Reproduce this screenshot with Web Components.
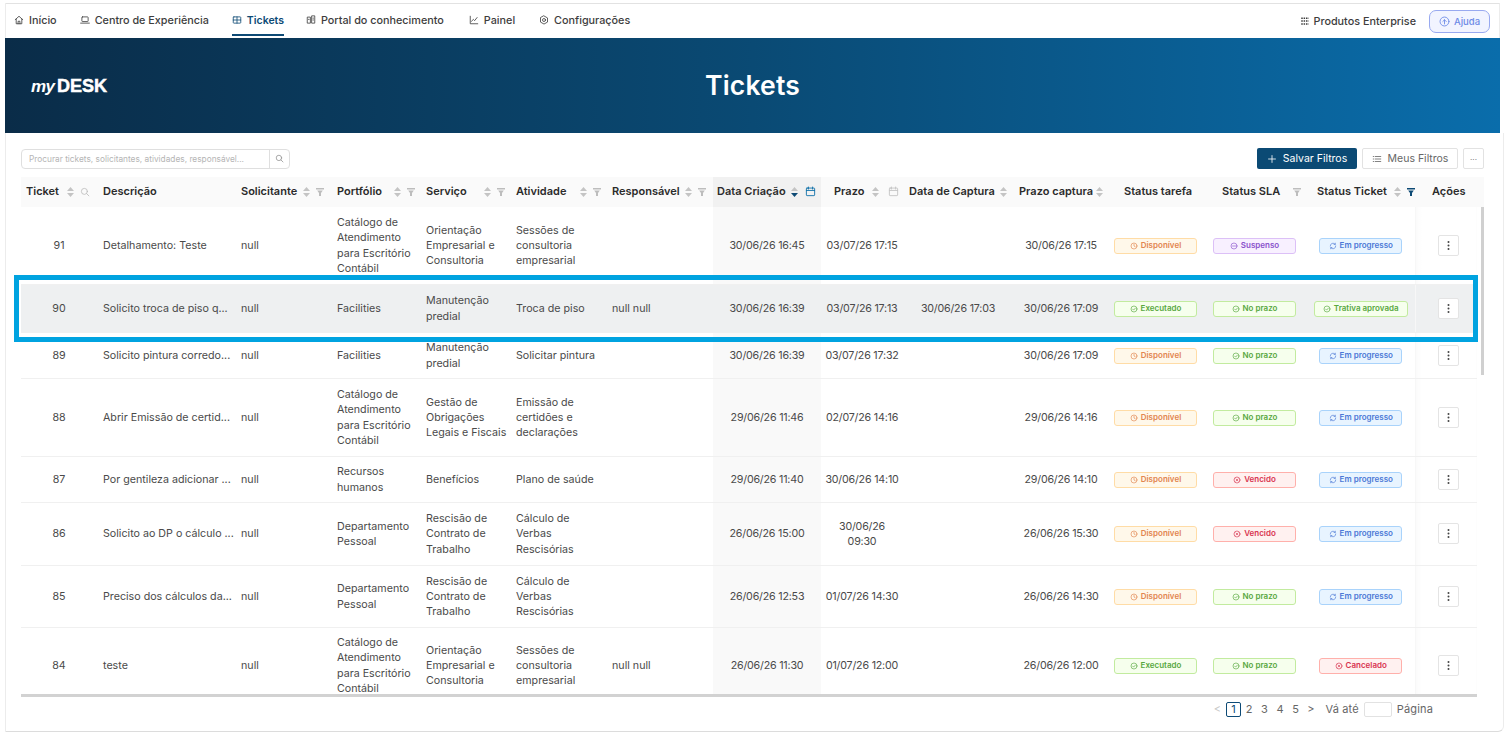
<!DOCTYPE html>
<html lang="pt-BR">
<head>
<meta charset="utf-8">
<title>Tickets</title>
<style>
    html, body { margin: 0; padding: 0; height: 733px; overflow: hidden; background: #fff; }
    body { font-family: Inter, "Open Sans", sans-serif; color: #444; }
</style>
</head>
<body>
<desk-app>
    <top-nav></top-nav>
    <hero-banner title="Tickets"></hero-banner>
    <ticket-panel></ticket-panel>
    <row-highlight></row-highlight>
</desk-app>

<script>
const svg = (body, size = 10, extra = '') =>
    `<svg width="${size}" height="${size}" viewBox="0 0 16 16" fill="none" stroke="currentColor" stroke-width="1.3" stroke-linecap="round" stroke-linejoin="round" ${extra}>${body}</svg>`;

const ICONS = {
    home: '<path d="M2 7.500 8 2l6 5.500"/><path d="M3.500 6.500V14h9V6.500"/><path d="M6.500 14v-4h3v4"/>',
    laptop: '<rect x="3" y="3" width="10" height="7.500" rx="1"/><path d="M1 13h14"/>',
    tickets: '<rect x="2" y="3" width="12" height="10" rx="1"/><path d="M8 3v10M2 8h12"/>',
    book: '<path d="M2 4v9h5V4zM9 2v11h5V2z"/><path d="M4 7h1M11 5h1M11 8h1"/>',
    chart: '<path d="M2 2v12h12"/><path d="m4 10 3-3 2 2 4-5"/>',
    gear: '<path d="M8 1.500 13.600 4.700v6.600L8 14.500l-5.600-3.200V4.700z"/><circle cx="8" cy="8" r="2.400"/>',
    grid: '<path stroke-width="2.400" stroke-linecap="butt" stroke-dasharray="2.400 1.400" d="M2 3.400h12M2 8h12M2 12.600h12"/>',
    help: '<circle cx="8" cy="8" r="6.500"/><path d="M8 11.500V5.500M5.500 8 8 5.500 10.500 8"/>',
    search: '<circle cx="7" cy="7" r="4.800"/><path d="m10.600 10.600 3.600 3.600"/>',
    plus: '<path d="M8 2.500v11M2.500 8h11"/>',
    list: '<path d="M5 4h9M5 8h9M5 12h9M2 4h.6M2 8h.6M2 12h.6"/>',
    calendar: '<rect x="2" y="3" width="12" height="11" rx="1"/><path d="M2 6.500h12M5 1.500v3M11 1.500v3"/>',
    clock: '<circle cx="8" cy="8" r="6"/><path d="M8 4.500V8l2.500 1.500"/>',
    check: '<circle cx="8" cy="8" r="6"/><path d="m5.200 8.200 2 2 3.600-4"/>',
    pause: '<circle cx="8" cy="8" r="6"/><path d="M5 8h6"/>',
    sync: '<path d="M13.500 8A5.500 5.500 0 0 1 3.600 11.300M2.500 8a5.500 5.500 0 0 1 9.900-3.300"/><path d="M12.600 2.400v2.500h-2.500M3.400 13.600v-2.500h2.500"/>',
    cross: '<circle cx="8" cy="8" r="6"/><path d="m5.800 5.800 4.400 4.400M10.200 5.800l-4.400 4.400"/>'
};

class DeskApp extends HTMLElement {
    constructor() {
        super();
        this.attachShadow({ mode: 'open' });
    }

    connectedCallback() {
        this.shadowRoot.innerHTML = `
            <style>
                :host { display: block; position: relative; height: 733px; box-sizing: border-box; padding-top: 3px; }
                .frame {
                    display: flex; flex-direction: column; height: 729px; margin-left: 5px;
                    border-left: 1px solid #ececec; box-sizing: border-box;
                }
            </style>
            <div class="frame"><slot></slot></div>
        `;
    }
}

class TopNav extends HTMLElement {
    constructor() {
        super();
        this.attachShadow({ mode: 'open' });
    }

    connectedCallback() {
        const items = [
            ['home', 'Início', 8],
            ['laptop', 'Centro de Experiência', 23],
            ['tickets', 'Tickets', 23],
            ['book', 'Portal do conhecimento', 22],
            ['chart', 'Painel', 25],
            ['gear', 'Configurações', 24]
        ];
        this.shadowRoot.innerHTML = `
            <style>
                :host {
                    display: flex; align-items: center; justify-content: space-between; height: 35px; flex: none; box-sizing: border-box;
                    margin-right: 4px; border-top: 1px solid #e2e2e2; border-right: 1px solid #ececec;
                    font-size: 10.8px; font-weight: 500; color: #3d3d3d;
                }
                nav { display: flex; height: 100%; }
                a { display: flex; align-items: center; gap: 5px; height: 32px; margin-bottom: 2px; color: inherit; text-decoration: none; box-sizing: border-box; padding-top: 2px; border-bottom: 2px solid transparent; }
                a.on { color: #0d4a75; font-size: 10.5px; font-weight: 600; border-bottom-color: #0d4a75; }
                .right { display: flex; align-items: center; }
                .products { display: flex; align-items: center; gap: 4px; margin-right: 13px; }
                button {
                    display: flex; align-items: center; justify-content: center; gap: 4px; width: 61px; height: 23px; margin-right: 9px;
                    font: inherit; font-size: 9.5px; color: #6d8ae6; background: #f2f4ff;
                    border: 1.5px solid #98a9f0; border-radius: 7px; padding: 0;
                }
            </style>
            <nav>
                ${items.map(([icon, label, ml]) => `
                    <a href="#" class="${label === 'Tickets' ? 'on' : ''}" style="margin-left:${ml}px">${svg(ICONS[icon])}<span>${label}</span></a>
                `).join('')}
            </nav>
            <div class="right">
                <span class="products">${svg(ICONS.grid)}Produtos Enterprise</span>
                <button>${svg(ICONS.help, 11)}Ajuda</button>
            </div>
        `;
    }
}

class HeroBanner extends HTMLElement {
    constructor() {
        super();
        this.attachShadow({ mode: 'open' });
    }

    connectedCallback() {
        this.shadowRoot.innerHTML = `
            <style>
                :host {
                    display: grid; grid-template-columns: 1fr auto 1fr; align-items: center; flex: none;
                    height: 95px; margin-left: -1px; margin-right: 4px; color: #fff;
                    background: linear-gradient(90deg, #0a2c48 0%, #0a4a74 50%, #0a6dab 100%);
                }
                .logo { display: flex; align-items: baseline; padding-left: 26px; }
                .my { font: italic 700 17px "Liberation Sans", sans-serif; margin-right: 2px; letter-spacing: -.5px; }
                .desk { font: 700 19px "Liberation Sans", sans-serif; -webkit-text-stroke: .5px #fff; transform: scaleX(.95); transform-origin: left; }
                h1 { margin: 0 0 2px; font-size: 26.5px; font-weight: 600; letter-spacing: .2px; }
            </style>
            <div class="logo"><span class="my">my</span><span class="desk">DESK</span></div>
            <h1>${this.getAttribute('title')}</h1>
            <div></div>
        `;
    }
}

class FilterBar extends HTMLElement {
    constructor() {
        super();
        this.attachShadow({ mode: 'open' });
    }

    connectedCallback() {
        this.shadowRoot.innerHTML = `
            <style>
                :host { display: flex; align-items: center; width: 1463px; height: 21px; flex: none; font-size: 10.5px; }
                .search { display: flex; width: 269px; height: 20px; box-sizing: border-box; border: 1px solid #dfdfdf; border-radius: 4px; color: #b5b5b5; font-size: 8.3px; }
                .search span { flex: 1; display: flex; align-items: center; padding-left: 7px; white-space: nowrap; border-right: 1px solid #dfdfdf; }
                .search i { display: flex; align-items: center; justify-content: center; width: 19px; color: #8c8c8c; }
                .actions { margin-left: auto; display: flex; gap: 5px; }
                button { display: flex; align-items: center; justify-content: center; gap: 6px; height: 21px; padding: 0; font: inherit; box-sizing: border-box; border-radius: 2px; }
                .save { width: 100px; background: #0b4a74; color: #fff; border: 0; }
                .mine { width: 96px; background: #fff; color: #666; border: 1px solid #e2e2e2; }
                .more { width: 21px; background: #fff; color: #777; border: 1px solid #e2e2e2; font-size: 8px; }
            </style>
            <div class="search"><span>Procurar tickets, solicitantes, atividades, responsável...</span><i>${svg(ICONS.search, 9)}</i></div>
            <div class="actions">
                <button class="save">${svg(ICONS.plus, 10)}Salvar Filtros</button>
                <button class="mine">${svg(ICONS.list, 10)}Meus Filtros</button>
                <button class="more">···</button>
            </div>
        `;
    }
}

class StatusPill extends HTMLElement {
    constructor() {
        super();
        this.attachShadow({ mode: 'open' });
    }

    connectedCallback() {
        const tones = {
            orange: ['#fff8ea', '#ffdca6', '#e2854f', 'clock'],
            purple: ['#f8f0ff', '#dcc0f7', '#8a52cc', 'pause'],
            blue: ['#e8f4ff', '#a9d3fb', '#4b78d6', 'sync'],
            green: ['#f6ffed', '#c2eb9f', '#58a83f', 'check'],
            red: ['#fff1f0', '#ffb0ab', '#d8334f', 'cross']
        };
        const [bg, line, ink, icon] = tones[this.getAttribute('tone')];
        this.shadowRoot.innerHTML = `
            <style>
                :host {
                    display: inline-flex; align-items: center; justify-content: center; gap: 3px; box-sizing: border-box;
                    min-width: 83px; height: 16px; padding: 0 8px; border-radius: 3px;
                    font-size: 8px; font-weight: 600; white-space: nowrap; vertical-align: middle;
                    background: ${bg}; border: 1px solid ${line}; color: ${ink};
                }
            </style>
            ${svg(ICONS[icon], 8)}<slot></slot>
        `;
    }
}

class RowActions extends HTMLElement {
    constructor() {
        super();
        this.attachShadow({ mode: 'open' });
    }

    connectedCallback() {
        this.shadowRoot.innerHTML = `
            <style>
                :host { display: inline-flex; align-items: center; justify-content: center; width: 21px; height: 21px; box-sizing: border-box; background: #fff; border: 1px solid #e4e4e4; border-radius: 2px; vertical-align: middle; }
            </style>
            <svg width="3" height="9" viewBox="0 0 3 9" fill="#444"><circle cx="1.500" cy="1" r="1"/><circle cx="1.500" cy="4.500" r="1"/><circle cx="1.500" cy="8" r="1"/></svg>
        `;
    }
}

const SORT = (active) => `<svg width="7" height="10" viewBox="0 0 7 10"><path d="M3.500 0 7 4H0z" fill="#c4c4c4"/><path d="M0 6h7l-3.500 4z" fill="${active ? '#0d4a75' : '#c4c4c4'}"/></svg>`;
const FUNNEL = (active) => `<svg width="8" height="8" viewBox="0 0 8 8"><path d="M0 0h8v1.500H0zM1.200 2.500h5.600L5 5v3H3V5z" fill="${active ? '#0d4a75' : '#bdbdbd'}"/></svg>`;

// name, width, left pad, right pad, icon markup
const COLUMNS = [
    ['Ticket', 76, 5, 7, `${SORT()}<span style="color:#bbb;display:flex;margin-left:6px">${svg(ICONS.search, 10)}</span>`],
    ['Descrição', 138, 6, 4, ''],
    ['Solicitante', 96, 6, 7, `${SORT()}<span class="sp"></span>${FUNNEL()}`],
    ['Portfólio', 89, 6, 5, `${SORT()}<span class="sp"></span>${FUNNEL()}`],
    ['Serviço', 90, 6, 5, `${SORT()}<span class="sp"></span>${FUNNEL()}`],
    ['Atividade', 96, 6, 5, `${SORT()}<span class="sp"></span>${FUNNEL()}`],
    ['Responsável', 107, 6, 7, `${SORT()}<span class="sp"></span>${FUNNEL()}`],
    ['Data Criação', 108, 4, 5, `${SORT(true)}<span style="color:#0d6fa8;display:flex;margin-left:7px">${svg(ICONS.calendar, 11)}</span>`],
    ['Prazo', 82, 13, 4, `${SORT()}<span style="color:#c4c4c4;display:flex;margin-left:9px">${svg(ICONS.calendar, 11)}</span>`],
    ['Data de Captura', 110, 6, 6, SORT()],
    ['Prazo captura', 96, 6, 6, SORT()],
    ['Status tarefa', 93, 15, 0, ''],
    ['Status SLA', 108, 20, 9, FUNNEL()],
    ['Status Ticket', 105, 7, 0, `${SORT()}<span class="sp"></span>${FUNNEL(true)}`],
    ['Ações', 62, 17, 0, ''],
    ['', 7, 0, 0, '']
];

const EM = ['blue', 'Em progresso'], DISP = ['orange', 'Disponível'], EXEC = ['green', 'Executado'];
const PRAZO = ['green', 'No prazo'], VENC = ['red', 'Vencido'];
const CAT = 'Catálogo de\nAtendimento\npara Escritório\nContábil';

const ROWS = [
    { h: 77, id: 91, d: 'Detalhamento: Teste', p: CAT, s: 'Orientação\nEmpresarial e\nConsultoria', a: 'Sessões de\nconsultoria\nempresarial', r: '', c: '30/06/26 16:45', z: '03/07/26 17:15', dc: '', pc: '30/06/26 17:15', st: [DISP, ['purple', 'Suspenso'], EM] },
    { h: 48, id: 90, sel: true, d: 'Solicito troca de piso q...', p: 'Facilities', s: 'Manutenção\npredial', a: 'Troca de piso', r: 'null null', c: '30/06/26 16:39', z: '03/07/26 17:13', dc: '30/06/26 17:03', pc: '30/06/26 17:09', st: [EXEC, PRAZO, ['green', 'Trativa aprovada']] },
    { h: 46, id: 89, d: 'Solicito pintura corredo...', p: 'Facilities', s: 'Manutenção\npredial', a: 'Solicitar pintura', r: '', c: '30/06/26 16:39', z: '03/07/26 17:32', dc: '', pc: '30/06/26 17:09', st: [DISP, PRAZO, EM] },
    { h: 78, id: 88, d: 'Abrir Emissão de certid...', p: CAT, s: 'Gestão de\nObrigações\nLegais e Fiscais', a: 'Emissão de\ncertidões e\ndeclarações', r: '', c: '29/06/26 11:46', z: '02/07/26 14:16', dc: '', pc: '29/06/26 14:16', st: [DISP, PRAZO, EM] },
    { h: 46, id: 87, d: 'Por gentileza adicionar ...', p: 'Recursos\nhumanos', s: 'Benefícios', a: 'Plano de saúde', r: '', c: '29/06/26 11:40', z: '30/06/26 14:10', dc: '', pc: '29/06/26 14:10', st: [DISP, VENC, EM] },
    { h: 63, id: 86, d: 'Solicito ao DP o cálculo ...', p: 'Departamento\nPessoal', s: 'Rescisão de\nContrato de\nTrabalho', a: 'Cálculo de\nVerbas\nRescisórias', r: '', c: '26/06/26 15:00', z: '30/06/26\n09:30', dc: '', pc: '26/06/26 15:30', st: [DISP, VENC, EM] },
    { h: 62, id: 85, d: 'Preciso dos cálculos da...', p: 'Departamento\nPessoal', s: 'Rescisão de\nContrato de\nTrabalho', a: 'Cálculo de\nVerbas\nRescisórias', r: '', c: '26/06/26 12:53', z: '01/07/26 14:30', dc: '', pc: '26/06/26 14:30', st: [DISP, PRAZO, EM] },
    { h: 76, id: 84, d: 'teste', p: CAT, s: 'Orientação\nEmpresarial e\nConsultoria', a: 'Sessões de\nconsultoria\nempresarial', r: 'null null', c: '26/06/26 11:30', z: '01/07/26 12:00', dc: '', pc: '26/06/26 12:00', st: [EXEC, PRAZO, ['red', 'Cancelado']] }
];

class TicketTable extends HTMLElement {
    constructor() {
        super();
        this.attachShadow({ mode: 'open' });
    }

    connectedCallback() {
        this.render();
    }

    renderRow(row) {
        const pill = ([tone, label]) => `<status-pill tone="${tone}">${label}</status-pill>`;
        return `
            <tr class="${row.sel ? 'sel' : ''}" style="height:${row.h}px">
                <td class="c">${row.id}</td>
                <td>${row.d}</td>
                <td>null</td>
                <td>${row.p}</td>
                <td>${row.s}</td>
                <td>${row.a}</td>
                <td>${row.r}</td>
                <td class="c hot date">${row.c}</td>
                <td class="c date">${row.z}</td>
                <td class="c date">${row.dc}</td>
                <td class="c date">${row.pc}</td>
                <td class="c">${pill(row.st[0])}</td>
                <td class="c pr">${pill(row.st[1])}</td>
                <td class="c pr">${pill(row.st[2])}</td>
                <td class="c act"><row-actions></row-actions></td>
                <td class="end"></td>
            </tr>
        `;
    }

    render() {
        this.shadowRoot.innerHTML = `
            <style>
                :host { display: block; position: relative; height: 517px; flex: none; overflow: hidden; width: 1463px; }
                table { border-collapse: collapse; table-layout: fixed; width: 1463px; font-size: 10.7px; line-height: 15.3px; color: #4a4a4a; }
                th { height: 30px; padding: 0; background: #fafafa; font-size: 11px; font-weight: 600; color: #2b2b2b; text-align: left; }
                th.hot { background: #f1f1f1; }
                th div { display: flex; align-items: center; white-space: nowrap; }
                th .icons { margin-left: auto; display: flex; align-items: center; }
                th .sp { width: 6px; }
                td { padding: 1px 6px 0; vertical-align: middle; white-space: pre; overflow: hidden; border-bottom: 1px solid #f0f0f0; box-sizing: border-box; }
                td.c { text-align: center; padding-left: 0; padding-right: 0; }
                td.date { letter-spacing: -.2px; }
                td.hot { background: #f9f9f9; }
                td.pr { padding-right: 3px; }
                td.act { padding: 0 0 0 5px; border-left: 1px solid #f7f7f7; background: linear-gradient(90deg, #fafafa, #fff 6px); }
                td.end { padding: 0; border-bottom: 0; background: #fff; }
                tr.sel td { background: #eef0f1; }
                tr.sel td.end { background: #fff; }
                .thumb { position: absolute; right: 0; top: 30px; width: 3px; height: 168px; background: #d0d0d0; }
            </style>
            <table>
                <colgroup>${COLUMNS.map(c => `<col style="width:${c[1]}px">`).join('')}</colgroup>
                <thead>
                    <tr>
                        ${COLUMNS.map(c => `
                            <th class="${c[0] === 'Data Criação' ? 'hot' : ''}">
                                <div style="padding:0 ${c[3]}px 0 ${c[2]}px">${c[0]}${c[4] ? `<span class="icons">${c[4]}</span>` : ''}</div>
                            </th>
                        `).join('')}
                    </tr>
                </thead>
                <tbody>${ROWS.map(r => this.renderRow(r)).join('')}</tbody>
            </table>
            <div class="thumb"></div>
        `;
    }
}

class PagerBar extends HTMLElement {
    constructor() {
        super();
        this.attachShadow({ mode: 'open' });
    }

    connectedCallback() {
        this.shadowRoot.innerHTML = `
            <style>
                :host { display: flex; align-items: center; justify-content: flex-end; height: 16px; flex: none; width: 1412px; font-size: 11px; color: #666; }
                span { display: flex; align-items: center; justify-content: center; width: 15px; height: 15px; box-sizing: border-box; }
                .cur { border: 1px solid #0d4a75; color: #0d4a75; border-radius: 2px; }
                .off { color: #c8c8c8; }
                .pg { margin-left: .5px; }
                label { margin: 0 5px 0 7px; white-space: nowrap; letter-spacing: .15px; }
                i { display: block; width: 28px; height: 15px; box-sizing: border-box; border: 1px solid #e2e2e2; border-radius: 2px; margin-right: 5px; }
            </style>
            <span class="off">&lt;</span>
            <span class="cur" style="margin-left:1px">1</span>
            <span class="pg">2</span><span class="pg">3</span><span class="pg">4</span><span class="pg">5</span>
            <span class="pg">&gt;</span>
            <label>Vá até</label>
            <i></i>
            <label style="margin:0">Página</label>
        `;
    }
}

class TicketPanel extends HTMLElement {
    constructor() {
        super();
        this.attachShadow({ mode: 'open' });
    }

    connectedCallback() {
        this.shadowRoot.innerHTML = `
            <style>
                :host {
                    display: flex; flex-direction: column; flex: 1; min-height: 0; box-sizing: border-box; padding: 15px 0 0 15px;
                    border-right: 1px solid #ececec; border-bottom: 1px solid #dcdcdc; border-bottom-right-radius: 6px;
                }
                ticket-table { margin-top: 8px; }
                .hbar { height: 3px; width: 1456px; background: #d2d2d2; flex: none; }
                pager-bar { margin-top: 4px; }
            </style>
            <filter-bar></filter-bar>
            <ticket-table></ticket-table>
            <div class="hbar"></div>
            <pager-bar></pager-bar>
        `;
    }
}

class RowHighlight extends HTMLElement {
    constructor() {
        super();
        this.attachShadow({ mode: 'open' });
    }

    connectedCallback() {
        // callout drawn over the table, not part of its flow
        this.shadowRoot.innerHTML = `
            <style>
                :host { position: absolute; left: 14px; top: 275px; width: 1464px; height: 67px; box-sizing: border-box; border: 5px solid #00a3e0; pointer-events: none; }
            </style>
        `;
    }
}

customElements.define('desk-app', DeskApp);
customElements.define('top-nav', TopNav);
customElements.define('hero-banner', HeroBanner);
customElements.define('filter-bar', FilterBar);
customElements.define('status-pill', StatusPill);
customElements.define('row-actions', RowActions);
customElements.define('ticket-table', TicketTable);
customElements.define('pager-bar', PagerBar);
customElements.define('ticket-panel', TicketPanel);
customElements.define('row-highlight', RowHighlight);
</script>
</body>
</html>
